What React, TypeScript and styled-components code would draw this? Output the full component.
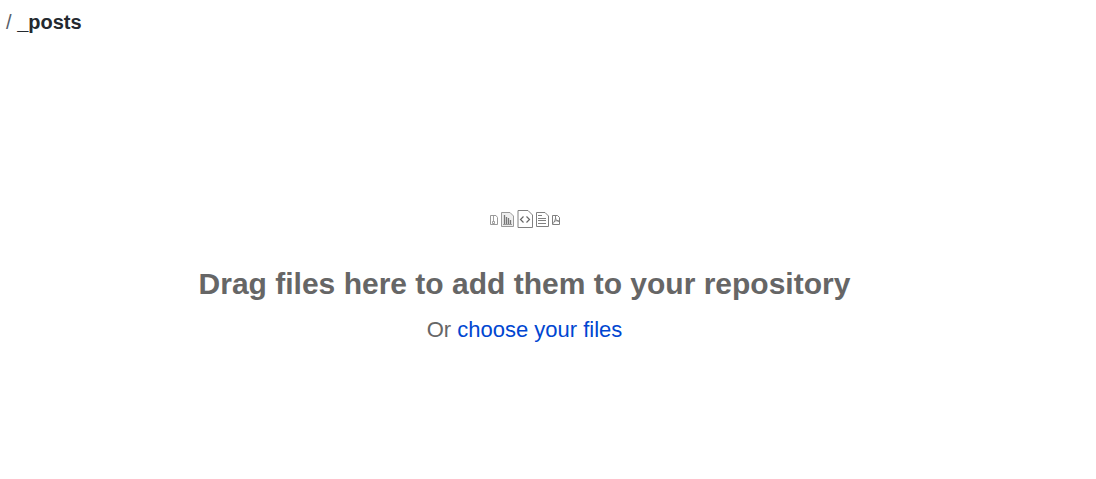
import React from "react";
import styled, { createGlobalStyle } from "styled-components";

const GlobalStyle = createGlobalStyle`
  * { box-sizing: border-box; }
  body {
    margin: 0;
    background: #fff;
    color: #24292f;
    font-family: "Liberation Sans", Arial, sans-serif;
  }
`;

const Page = styled.div`
  display: flex;
  flex-direction: column;
`;

const Breadcrumb = styled.nav`
  padding: 8px 6px;
  font-size: 20px;
  line-height: 28px;
`;

const Separator = styled.span`
  color: #57606a;
`;

const DropZone = styled.main`
  display: flex;
  flex-direction: column;
  align-items: center;
  margin-right: 47px;
  padding: 164px 16px 80px;
  color: #666;
  text-align: center;
`;

const FileIcons = styled.div`
  display: flex;
  align-items: center;
  gap: 3px;
  height: 22px;
`;

const Icon = styled.svg<{ $muted?: boolean }>`
  display: block;
  fill: none;
  stroke: ${(p) => (p.$muted ? "#999" : "#808080")};
`;

const Title = styled.h1`
  margin: 32px 0 0;
  font-size: 30px;
  line-height: 44px;
`;

const Hint = styled.p`
  margin: 8px 0 0;
  font-size: 22px;
  line-height: 32px;
`;

const ChooseLink = styled.a`
  color: #0046d1;
  text-decoration: none;
`;

export default function App() {
  return (
    <Page>
      <GlobalStyle />
      <Breadcrumb aria-label="Path">
        <Separator>/</Separator> <strong>_posts</strong>
      </Breadcrumb>
      <DropZone>
        <FileIcons aria-hidden="true">
          <Icon $muted width="8" height="12" viewBox="0 -2 8 12">
            <path d="M.5 .5H6L7.5 2.5V9.5H.5Z" />
            <path d="M3.5 1V6M2.5 8.5V6.5H4.5V8.5Z" stroke="#888" strokeWidth=".8" />
          </Icon>
          <Icon $muted width="13" height="15" viewBox="0 0 13 15">
            <path d="M.5 .5H9L12.5 4V14.5H.5Z" fill="#eee" />
            <path d="M3.5 12V3M5.5 12V5M7.5 12V6M9.5 12V8" stroke="#777" strokeWidth="1.3" />
            <path d="M2 12.5H11" />
          </Icon>
          <Icon width="16" height="18" viewBox="0 0 16 18">
            <path d="M1 .5H11L15.5 5V17.5H1Z" strokeLinejoin="round" />
            <path d="M6.5 6.5L3.5 9.5L6.5 12.5M9.5 6.5L12.5 9.5L9.5 12.5" stroke="#666" strokeWidth="1.2" />
          </Icon>
          <Icon width="13" height="15" viewBox="0 0 13 15">
            <path d="M.5 .5H9L12.5 4V14.5H.5Z" />
            <path d="M2 3.5H6M2 6.5H10M2 8.5H10M2 11.5H10" />
          </Icon>
          <Icon width="8" height="12" viewBox="0 -2 8 12">
            <path d="M.5 .5H5.5L7.5 2.5V9.5H.5Z" />
            <path d="M3.5 1C4 4 2.5 7 .5 9M3.5 3C4 5 5.5 6.5 7.5 6.5M2 6.5C4 5.5 6 5.5 7.5 6" stroke="#777" strokeWidth=".9" />
          </Icon>
        </FileIcons>
        <Title>Drag files here to add them to your repository</Title>
        <Hint>
          Or <ChooseLink href="#choose">choose your files</ChooseLink>
        </Hint>
      </DropZone>
    </Page>
  );
}
